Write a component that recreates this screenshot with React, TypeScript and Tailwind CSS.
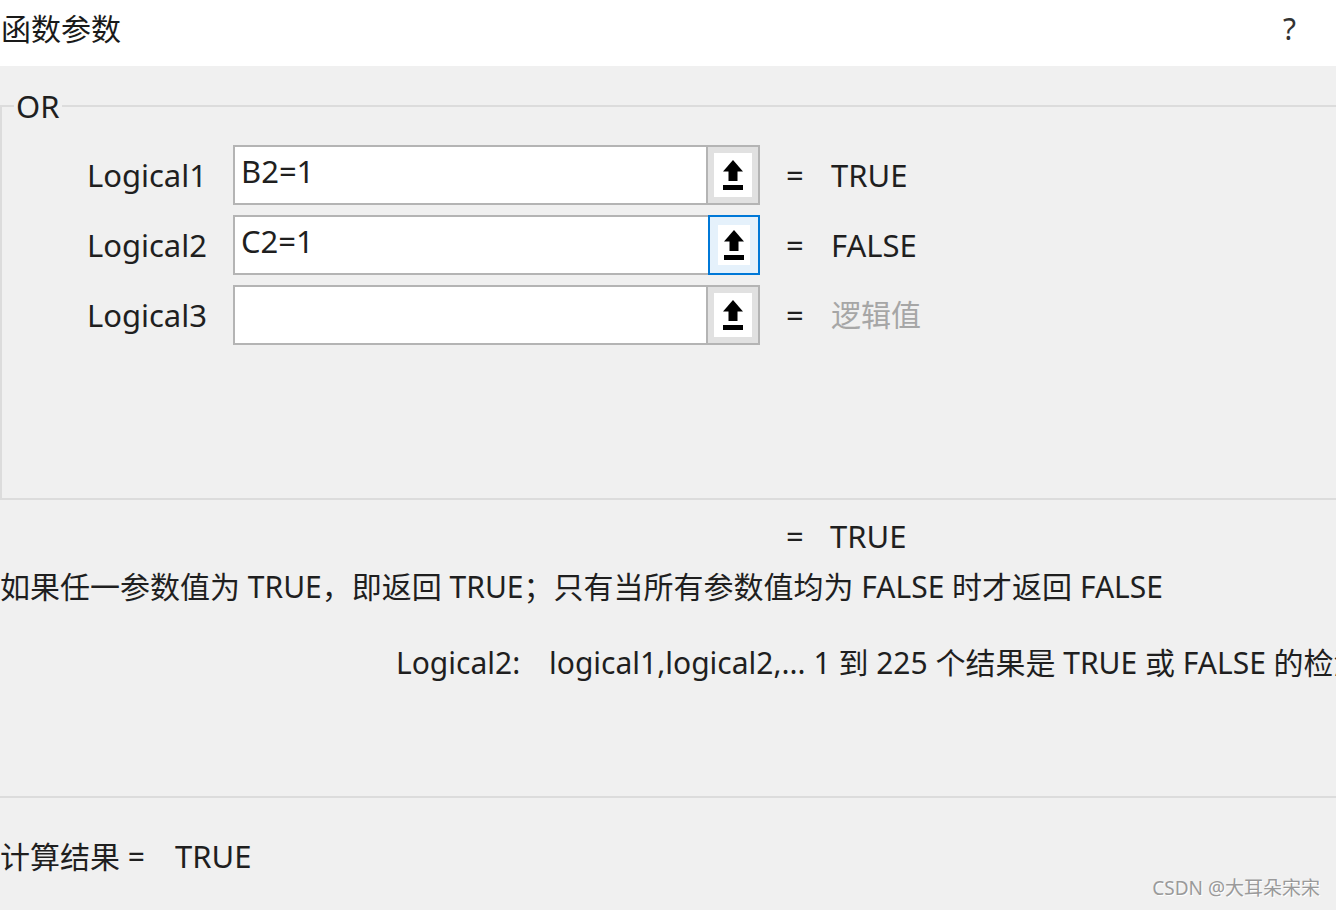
import React from "react";

const font = { fontFamily: '"Noto Sans", "Noto Sans CJK SC", sans-serif' };

function PickIcon() {
  return (
    <svg width="22" height="32" viewBox="0 0 22 32" fill="#000">
      <polygon points="11,1 1,12.5 21,12.5" />
      <rect x="6.5" y="11" width="9" height="11" />
      <rect x="1" y="26" width="20" height="5" />
    </svg>
  );
}

function ArgRow({
  label,
  value,
  result,
  focused = false,
  hint = false,
}: {
  label: string;
  value: string;
  result: string;
  focused?: boolean;
  hint?: boolean;
}) {
  return (
    <div className="flex items-center h-[60px]">
      <div className="w-[206px] text-right pr-[1px] text-[31px] leading-[40px] text-[#1f1f1f]">{label}</div>
      <div className="ml-[25px] w-[527px] h-[60px] flex bg-white border-2 border-[#b4b4b4]">
        <div className="flex-1 pl-[6px] pt-[4px] text-[31px] leading-[40px] text-[#1f1f1f]">{value}</div>
        <div
          className={
            focused
              ? "w-[52px] -my-[2px] -mr-[2px] border-2 border-[#0078d7] bg-[#e5f1fb] p-[8px] flex"
              : "w-[52px] border-l-2 border-[#b4b4b4] bg-[#e1e1e1] p-[6px] flex"
          }
        >
          <div className="flex-1 bg-white flex items-center justify-center">
            <PickIcon />
          </div>
        </div>
      </div>
      <div className="ml-[26px] w-[45px] text-[31px] leading-[40px] text-[#1f1f1f]">=</div>
      <div className={hint ? "text-[30px] leading-[40px] text-[#a6a6a6]" : "text-[31px] leading-[40px] text-[#1f1f1f]"}>
        {result}
      </div>
    </div>
  );
}

export default function App() {
  return (
    <div className="relative w-[1336px] h-[910px] overflow-hidden bg-[#f0f0f0]" style={font}>
      <div className="h-[66px] bg-white flex items-center justify-between pl-[1px] pr-[40px]">
        <span className="text-[30px] leading-[40px] text-[#1a1a1a] -mt-[8px]">函数参数</span>
        <span className="text-[30px] leading-[40px] text-[#333] -mt-[8px]">?</span>
      </div>

      <fieldset className="mt-[22px] -mr-[4px] h-[412px] border-2 border-r-0 border-[#dcdcdc]">
        <legend className="ml-[12px] px-[2px] text-[31px] leading-[36px] text-[#1f1f1f]">OR</legend>
        <div className="mt-[21px] flex flex-col gap-[10px]">
          <ArgRow label="Logical1" value="B2=1" result="TRUE" />
          <ArgRow label="Logical2" value="C2=1" result="FALSE" focused />
          <ArgRow label="Logical3" value="" result="逻辑值" hint />
        </div>
      </fieldset>

      <div className="mt-[16px] flex h-[40px] items-center text-[31px] text-[#1f1f1f]">
        <span className="ml-[786px] w-[44px] shrink-0">=</span>
        <span>TRUE</span>
      </div>
      <div className="mt-[10px] h-[40px] flex items-center text-[30px] text-[#1f1f1f] whitespace-nowrap">
        如果任一参数值为 TRUE，即返回 TRUE；只有当所有参数值均为 FALSE 时才返回 FALSE
      </div>
      <div className="mt-[36px] h-[40px] flex items-center pl-[396px] text-[30px] text-[#1f1f1f] whitespace-nowrap">
        <span className="w-[153px] shrink-0">Logical2:</span>
        <span className="shrink-0">logical1,logical2,... 1 到 225 个结果是 TRUE 或 FALSE 的检测条件</span>
      </div>

      <div className="mt-[114px] h-[2px] bg-[#dcdcdc]" />

      <div className="mt-[38px] h-[40px] flex items-center text-[30px] text-[#1f1f1f] whitespace-nowrap">
        <span className="w-[175px] shrink-0">计算结果 =</span>
        <span className="text-[31px]">TRUE</span>
      </div>

      <div
        className="absolute right-[16px] bottom-[8px] text-[19px] text-[#9a9a9a]"
        style={{ textShadow: "1px 1px 0 #ffffff" }}
      >
        CSDN @大耳朵宋宋
      </div>
    </div>
  );
}
